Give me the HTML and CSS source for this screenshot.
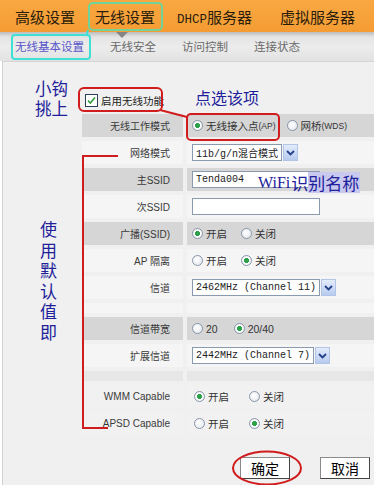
FILE: index.html
```html
<!DOCTYPE html>
<html lang="zh-CN">
<head>
<meta charset="utf-8">
<title>无线基本设置</title>
<link rel="stylesheet" href="styles.css">
</head>
<body>
<div class="page">
  <nav class="topnav">
    <span class="nav-item n1">高级设置</span>
    <span class="nav-item n2">无线设置</span>
    <span class="nav-item n3"><span class="latin">DHCP</span>服务器</span>
    <span class="nav-item n4">虚拟服务器</span>
  </nav>
  <div class="subnav">
    <span class="pointer"></span>
    <span class="sub active">无线基本设置</span>
    <span class="sub">无线安全</span>
    <span class="sub">访问控制</span>
    <span class="sub">连接状态</span>
  </div>
  <main class="panel">
    <div class="form">
      <div class="enable">
        <span class="checkbox"><svg width="11" height="11" viewBox="0 0 11 11"><path d="M2 5.5 L4.3 8 L9 2.5" fill="none" stroke="#2f9a3c" stroke-width="1.6"/></svg></span>
        <span>启用无线功能</span>
      </div>

      <div class="lab dark">无线工作模式</div>
      <div class="val dark">
        <span class="opt"><span class="radio on"></span>无线接入点<span class="small">(AP)</span></span>
        <span class="opt o-mode"><span class="radio"></span>网桥<span class="small">(WDS)</span></span>
      </div>

      <div class="lab">网络模式</div>
      <div class="val">
        <span class="select"><span class="sel-field">11b/g/n混合模式</span><span class="sel-btn"><svg width="9" height="6" viewBox="0 0 9 6"><path d="M1 1 L4.5 4.5 L8 1" fill="none" stroke="#23408a" stroke-width="1.8"/></svg></span></span>
      </div>

      <div class="lab dark">主SSID</div>
      <div class="val dark"><span class="txt">Tenda004</span></div>

      <div class="lab">次SSID</div>
      <div class="val"><span class="txt"></span></div>

      <div class="lab dark">广播(SSID)</div>
      <div class="val dark">
        <span class="opt"><span class="radio on"></span>开启</span>
        <span class="opt"><span class="radio"></span>关闭</span>
      </div>

      <div class="lab">AP 隔离</div>
      <div class="val">
        <span class="opt"><span class="radio"></span>开启</span>
        <span class="opt"><span class="radio on"></span>关闭</span>
      </div>

      <div class="lab">信道</div>
      <div class="val">
        <span class="select"><span class="sel-field">2462MHz (Channel 11)</span><span class="sel-btn"><svg width="9" height="6" viewBox="0 0 9 6"><path d="M1 1 L4.5 4.5 L8 1" fill="none" stroke="#23408a" stroke-width="1.8"/></svg></span></span>
      </div>

      <div class="lab blank"></div>
      <div class="val blank"></div>

      <div class="lab dark">信道带宽</div>
      <div class="val dark">
        <span class="opt"><span class="radio"></span>20</span>
        <span class="opt o-bw"><span class="radio on"></span>20/40</span>
      </div>

      <div class="lab">扩展信道</div>
      <div class="val">
        <span class="select"><span class="sel-field">2442MHz (Channel 7)</span><span class="sel-btn"><svg width="9" height="6" viewBox="0 0 9 6"><path d="M1 1 L4.5 4.5 L8 1" fill="none" stroke="#23408a" stroke-width="1.8"/></svg></span></span>
      </div>

      <div class="lab blank mid"></div>
      <div class="val blank mid"></div>

      <div class="lab plain">WMM Capable</div>
      <div class="val plain wide">
        <span class="opt"><span class="radio on"></span>开启</span>
        <span class="opt o-wmm"><span class="radio"></span>关闭</span>
      </div>

      <div class="lab plain">APSD Capable</div>
      <div class="val plain wide">
        <span class="opt"><span class="radio"></span>开启</span>
        <span class="opt o-wmm"><span class="radio on"></span>关闭</span>
      </div>
    </div>

    <div class="actions">
      <button class="btn">确定</button>
      <button class="btn">取消</button>
    </div>
  </main>

  <div class="note note-hook">小钩挑上</div>
  <div class="note note-pick">点选该项</div>
  <div class="note note-wifi"><span class="wifi-latin">WiFi</span>识<span class="hl">别名称</span></div>
  <div class="note note-default">使用默认值即</div>

  <svg class="marks" width="374" height="485" viewBox="0 0 374 485">
    <rect x="89" y="3" width="73" height="27" rx="4" fill="none" stroke="#6fd49c" stroke-width="2"/>
    <line x1="88" y1="30" x2="86" y2="36" stroke="#3fe0d6" stroke-width="2"/>
    <rect x="12" y="35" width="78" height="24" rx="3" fill="none" stroke="#3fe0d6" stroke-width="2"/>
    <rect x="79" y="88" width="83" height="23" rx="5" fill="none" stroke="#d01c1c" stroke-width="2"/>
    <line x1="160" y1="110" x2="187" y2="117" stroke="#d01c1c" stroke-width="2"/>
    <rect x="187" y="114" width="92" height="26" rx="4" fill="none" stroke="#d01c1c" stroke-width="2"/>
    <path d="M118 156 H83 V428 H108" fill="none" stroke="#d01c1c" stroke-width="2"/>
    <ellipse cx="267" cy="468" rx="34" ry="16.5" fill="none" stroke="#d01c1c" stroke-width="2"/>
  </svg>
</div>
</body>
</html>
```
FILE: styles.css
```css
* { box-sizing: border-box; margin: 0; padding: 0; }
html, body { width: 374px; height: 485px; overflow: hidden; background: #ffffff; }
body { font-family: "Noto Sans CJK SC", sans-serif; color: #222; }

.page { position: relative; width: 374px; height: 485px; }

/* top navigation */
.topnav {
  height: 32px;
  background: linear-gradient(#f9a843, #f49c33);
  display: flex;
  align-items: center;
  padding-left: 8px;
}
.nav-item {
  display: block;
  height: 29px;
  line-height: 29px;
  padding: 0 7px;
  font-size: 15px;
  color: #2b1d0c;
  white-space: nowrap;
}
.n2 { margin-left: 6px; }
.n3 { margin-left: 8px; }
.n4 { margin-left: 14px; }
.latin { font-family: "Liberation Mono", monospace; font-size: 12.5px; }

/* sub navigation */
.subnav {
  position: relative;
  height: 29px;
  background: linear-gradient(#bcbcbc, #e4e4e4 5px, #ececec 50%, #e2e2e2);
  display: flex;
  align-items: center;
  padding-left: 11px;
  gap: 18px;
}
.pointer {
  position: absolute;
  left: 116px;
  top: 0;
  width: 0;
  height: 0;
  border-left: 6px solid transparent;
  border-right: 6px solid transparent;
  border-top: 6px solid #858585;
}
.sub { font-size: 11.5px; color: #6a6a6a; padding: 0 4px; line-height: 1; }
.sub.active { color: #5656c8; }

/* content panel */
.panel {
  margin-left: 2px;
  border-left: 1px solid #cfcfcf;
  border-top: 1px solid #d4d4d4;
  background: #f0f0f0;
  height: 424px;
  padding: 26px 0 0 79px;
}
.form {
  display: grid;
  grid-template-columns: 101px 1fr;
  gap: 4px;
  font-family: "Liberation Sans", "Noto Sans CJK SC", sans-serif;
  font-size: 10px;
  color: #3a3a3a;
}
.enable {
  grid-column: 1 / -1;
  height: 22px;
  display: flex;
  align-items: center;
  gap: 3px;
  padding: 2px 0 0 3px;
  font-size: 10.5px;
  color: #222;
}
.checkbox {
  width: 13px;
  height: 13px;
  border: 1px solid #2a3f55;
  background: #fff;
  display: flex;
  align-items: center;
  justify-content: center;
}
.lab {
  height: 23px;
  display: flex;
  align-items: center;
  justify-content: flex-end;
  padding-right: 13px;
  background: #f5f5f5;
}
.val {
  height: 23px;
  display: flex;
  align-items: center;
  padding-left: 5px;
  background: #f5f5f5;
}
.dark { background: #d6d6d6; }
.blank { height: 10px; }
.mid { background: #e7e7e7; }
.plain { background: #f1f1f1; }
.wide { padding-left: 7px; }

/* radios */
.opt {
  display: inline-flex;
  align-items: center;
  gap: 3px;
  font-size: 10.5px;
  color: #333;
  white-space: nowrap;
}
.opt + .opt { margin-left: 14px; }
.opt.o-mode { margin-left: 11px; }
.opt.o-bw { margin-left: 16px; }
.opt.o-wmm { margin-left: 20px; }
.small { font-size: 8.5px; margin-left: -3px; }
.radio {
  width: 11px;
  height: 11px;
  border-radius: 50%;
  border: 1px solid #8796a8;
  background: radial-gradient(circle at 40% 40%, #ffffff, #dfe4ea);
}
.radio.on {
  background: radial-gradient(circle, #2ea24a 0 2.3px, #ffffff 2.8px, #e2e7ec);
}

/* select & input */
.select { display: inline-flex; height: 17px; gap: 1px; }
.sel-field {
  display: flex;
  align-items: center;
  border: 1px solid #8a9bb0;
  background: #fff;
  padding: 0 3px;
  font-family: "Liberation Mono", "Noto Sans CJK SC", monospace;
  font-size: 10px;
  color: #222;
}
.sel-btn {
  width: 15px;
  border: 1px solid #b3c5e6;
  background: linear-gradient(#e3ecfc, #b7caef);
  display: flex;
  align-items: center;
  justify-content: center;
}
.txt {
  width: 128px;
  height: 17px;
  display: flex;
  align-items: center;
  border: 1px solid #8a9bb0;
  background: #fff;
  padding-left: 3px;
  font-family: "Liberation Mono", monospace;
  font-size: 10px;
  color: #222;
}

/* buttons */
.actions {
  display: flex;
  justify-content: flex-end;
  gap: 30px;
  padding-right: 4px;
  margin-top: 22px;
}
.btn {
  width: 50px;
  height: 22px;
  background: #fff;
  border: 1px solid #8a8a8a;
  border-right-color: #444;
  border-bottom-color: #444;
  font-family: "Noto Sans CJK SC", sans-serif;
  font-size: 14px;
  font-weight: normal;
  color: #000;
}

/* annotations */
.note {
  position: absolute;
  font-family: "Noto Sans CJK SC", sans-serif;
  color: #20209a;
  line-height: 1;
}
.note-hook { left: 35px; top: 78px; width: 34px; font-size: 16.5px; line-height: 20px; word-break: break-all; }
.note-pick { left: 195px; top: 89px; font-size: 16px; }
.note-wifi { left: 258px; top: 172px; font-size: 17px; line-height: 21px; display: flex; }
.wifi-latin { font-family: "Liberation Serif", serif; font-size: 16px; margin-right: 1px; }
.hl { background: #c9c9ef; padding-right: 1px; }
.note-default { left: 40px; top: 219px; width: 17px; font-size: 17px; line-height: 20.5px; word-break: break-all; }

.marks { position: absolute; left: 0; top: 0; pointer-events: none; }
```
